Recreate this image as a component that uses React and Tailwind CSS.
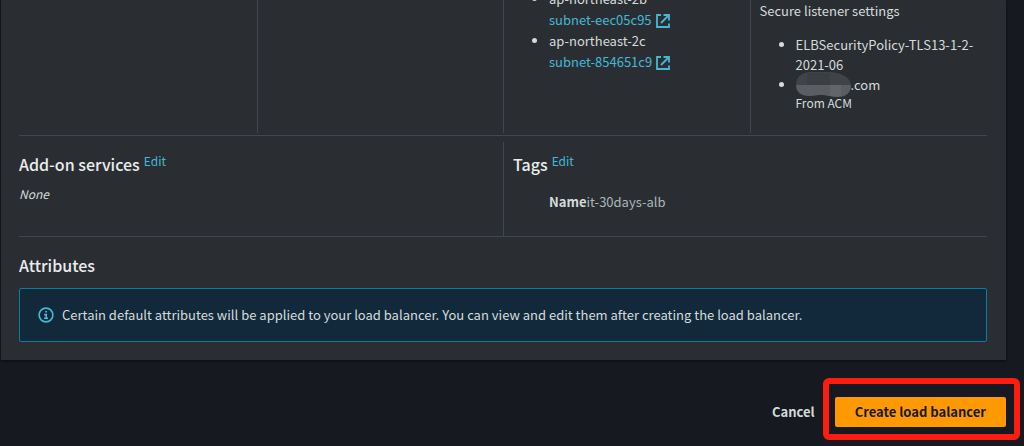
const subnets = [
  { zone: "ap-northeast-2b", id: "subnet-eec05c95" },
  { zone: "ap-northeast-2c", id: "subnet-854651c9" },
];

const ExternalIcon = () => (
  <svg
    viewBox="0 0 14 14"
    className="inline-block w-[14px] h-[14px] ml-1 align-[-3px]"
    fill="none"
    stroke="currentColor"
    strokeWidth="1.8"
  >
    <path d="M5 1H1v12h12V9.5" />
    <path d="M7.5 1H13v5.5" />
    <path d="M12.5 1.5L5 9" />
  </svg>
);

const InfoIcon = () => (
  <svg
    viewBox="0 0 16 16"
    className="w-4 h-4 shrink-0 text-[#44b9d6]"
    fill="none"
    stroke="currentColor"
    strokeWidth="1.6"
  >
    <circle cx="8" cy="8" r="6.9" />
    <path d="M6 11.2h4M8.2 11.2V7.6H6.2M7.2 4.8h1.8" />
  </svg>
);

const MaskedName = () => (
  <svg viewBox="0 0 55 25" className="inline-block w-[55px] h-[25px] -mt-3 -mb-2 align-middle">
    <path
      d="M0 13C0 5 6 0 14 0h20c12 1 20 5 21 13z"
      fill="#404347"
    />
    <path d="M11 1h23v12H11z" fill="#3b3f43" />
    <path
      d="M0 13h55c0 8-5 12-13 12-8 0-11-2-17-2-5 0-6 1-12 1C5 24 0 20 0 13z"
      fill="#5b5d60"
    />
    <path d="M34 13h11v11H34z" fill="#636568" />
  </svg>
);

const App = () => {
  return (
    <div className="bg-[#16191f] min-h-screen overflow-hidden font-['Noto_Sans_CJK_SC','Noto_Sans',sans-serif] text-[13px] leading-5 text-[#d5dbdb]">
      {/* Review panel */}
      <section className="bg-[#2a2e33] ml-px mr-[18px] pl-[9px] pr-2.5 pb-[18px] shadow-[0_1px_2px_#0b0d10]">
        {/* Summary row */}
        <div className="grid grid-cols-4 h-[133px]">
          <div />
          <div className="border-l border-[#414750]" />
          <div className="border-l border-[#414750] px-[9px]">
            <ul className="list-disc pl-9 -mt-3 leading-[21px]">
              {subnets.map((subnet) => (
                <li key={subnet.id}>
                  {subnet.zone}
                  <br />
                  <a href="#subnet" className="text-[#44b9d6]">
                    {subnet.id}
                    <ExternalIcon />
                  </a>
                </li>
              ))}
            </ul>
          </div>
          <div className="border-l border-[#414750] px-[9px] pt-px">
            <p>Secure listener settings</p>
            <ul className="list-disc pl-9 mt-3.5">
              <li>ELBSecurityPolicy-TLS13-1-2-2021-06</li>
              <li>
                <MaskedName />
                .com
                <div className="text-xs leading-4">From ACM</div>
              </li>
            </ul>
          </div>
        </div>

        <hr className="mx-[9px] mt-0.5 mb-1.5 border-[#414750]" />

        <div className="grid grid-cols-2 h-[94px]">
          <div className="px-[9px] pt-2.5">
            <div className="flex gap-1">
              <h2 className="text-base leading-6 font-medium text-[#eaeded]">Add-on services</h2>
              <a href="#addons" className="text-xs leading-[18px] text-[#44b9d6]">Edit</a>
            </div>
            <p className="mt-2 text-xs leading-5 italic">None</p>
          </div>
          <div className="border-l border-[#414750] px-[9px] pt-2.5">
            <div className="flex gap-1">
              <h2 className="text-base leading-6 font-medium text-[#eaeded]">Tags</h2>
              <a href="#tags" className="text-xs leading-[18px] text-[#44b9d6]">Edit</a>
            </div>
            <p className="mt-4 pl-9 text-[#aab7b8]">
              <b className="text-[#d5dbdb]">Name</b>it-30days-alb
            </p>
          </div>
        </div>

        <hr className="mx-[9px] border-[#414750]" />

        {/* Attributes */}
        <div className="px-[9px] pt-4">
          <h2 className="text-base leading-6 font-medium text-[#eaeded]">Attributes</h2>
          <div className="flex items-center gap-2 mt-[11px] px-[18px] py-4 border border-[#0a7f9c] rounded-xs bg-[#12293b]">
            <InfoIcon />
            <p>
              Certain default attributes will be applied to your load balancer.
              You can view and edit them after creating the load balancer.
            </p>
          </div>
        </div>
      </section>

      {/* Actions */}
      <div className="flex justify-end items-center mt-[18px] mr-1 font-bold">
        <button className="px-2 pt-1.5">Cancel</button>
        <div className="border-[6px] border-[#fc1c10] rounded-md pl-1.5 pr-2 pt-[13px] pb-[7px]">
          <button className="bg-[#ff9900] text-[#16191f] rounded-xs px-5 py-[5px]">
            Create load balancer
          </button>
        </div>
      </div>
    </div>
  );
};

export default App;
